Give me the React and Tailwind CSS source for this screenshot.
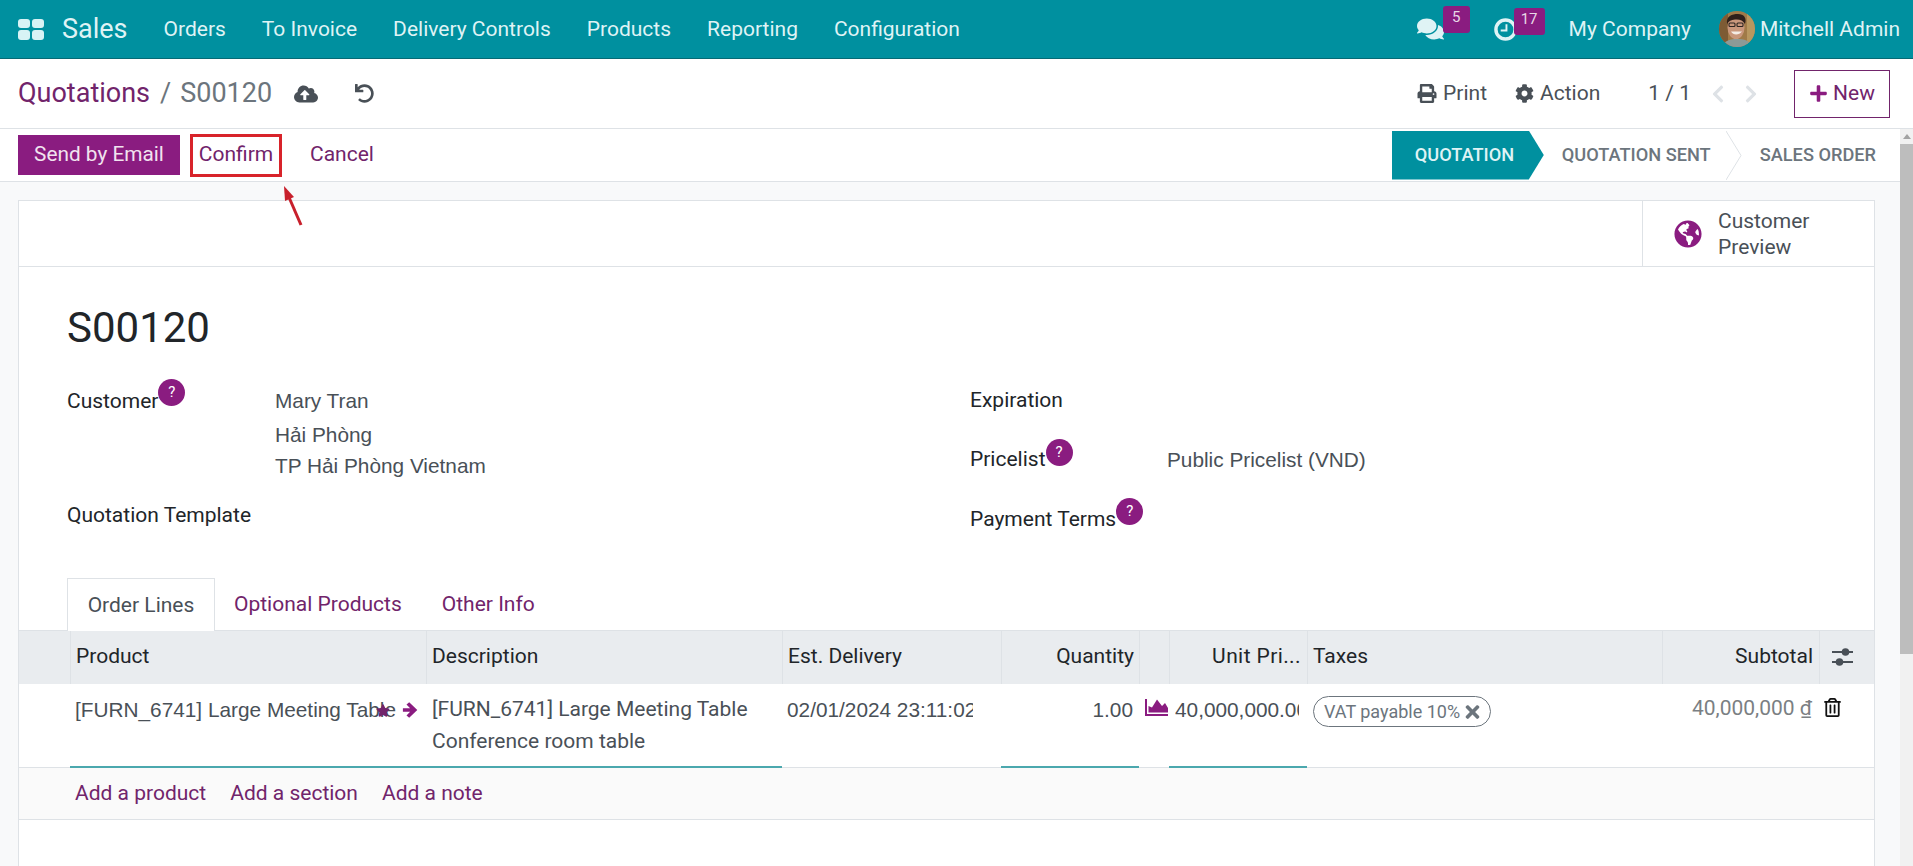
import React from "react";
import { FaComments, FaCloudUploadAlt, FaUndo, FaPrint, FaCog, FaPlus, FaChevronLeft, FaChevronRight, FaGlobeAmericas, FaStar, FaTimes, FaRegTrashAlt } from "react-icons/fa";

function Grid() {
  return (
    <div className="grid grid-cols-2 gap-[2px] w-[26px] h-[21px]">
      <div className="bg-[#d8f3f5] rounded-[3px]" />
      <div className="bg-[#d8f3f5] rounded-[3px]" />
      <div className="bg-[#d8f3f5] rounded-[3px]" />
      <div className="bg-[#d8f3f5] rounded-[3px]" />
    </div>
  );
}

function Avatar() {
  return (
    <svg width="36" height="36" viewBox="0 0 36 36" className="block shrink-0">
      <defs><clipPath id="av"><circle cx="18" cy="18" r="18" /></clipPath></defs>
      <g clipPath="url(#av)">
        <rect width="36" height="36" fill="#a07a48" />
        <rect x="0" y="0" width="9" height="36" fill="#7d5b34" />
        <rect x="28" y="0" width="8" height="36" fill="#b8975f" />
        <path d="M3 36 C5 29 12 28 18 28 C25 28 31 29 33 36 Z" fill="#8d9a97" />
        <ellipse cx="17" cy="16.5" rx="8.5" ry="11.5" fill="#c9977c" />
        <path d="M8 13 C7 5 13 3 19 3 C25 3 28 7 26 13 C24 9 20 8 16 8.500 C12 9 10 10 8 13 Z" fill="#2e201a" />
        <rect x="10" y="12" width="6" height="3.500" rx="1" fill="none" stroke="#2c2420" strokeWidth="1.100" />
        <rect x="18" y="12" width="6" height="3.500" rx="1" fill="none" stroke="#2c2420" strokeWidth="1.100" />
        <path d="M12 20.500 C14 24.500 20 24.500 23 20.500 Z" fill="#f4ece6" />
      </g>
    </svg>
  );
}

function Help() {
  return (
    <span className="inline-flex items-center justify-center w-[27px] h-[27px] rounded-full bg-[#8a1c80] text-white text-[15px]">?</span>
  );
}

function Th({ className = "", children }) {
  return <div className={`h-full flex items-center border-l border-[#dee2e6] px-[5px] pb-[2px] shrink-0 ${className}`}>{children}</div>;
}

export default function App() {
  return (
    <div className="w-[1913px] h-[866px] overflow-hidden flex flex-col bg-white text-[#4c4c4c] font-['Roboto',sans-serif]">
      {/* navbar */}
      <header className="h-[59px] shrink-0 bg-[#00909f] border-b border-[#066a75] flex items-center text-[#dff3f5] pl-[18px] pr-[13px]">
        <Grid />
        <span className="ml-[18px] text-[27px]">Sales</span>
        <nav className="ml-[36px] mt-[2px] flex gap-[36px] text-[21px]">
          <span>Orders</span>
          <span>To Invoice</span>
          <span>Delivery Controls</span>
          <span>Products</span>
          <span>Reporting</span>
          <span>Configuration</span>
        </nav>
        <div className="ml-auto flex items-center text-[21px]">
          <span className="relative">
            <FaComments className="w-[27px] h-[24px]" />
            <span className="absolute -top-[11px] left-[26px] h-[27px] w-[27px] bg-[#8a1c80] rounded-[3px] text-[#e8d8e6] text-[15px] leading-[22px] text-center">5</span>
          </span>
          <span className="relative ml-[50px]">
            <svg width="23" height="23" viewBox="0 0 24 24" className="block">
              <circle cx="12" cy="12" r="10" fill="none" stroke="currentColor" strokeWidth="3.600" />
              <path d="M13 6.500 V13 H7" fill="none" stroke="currentColor" strokeWidth="2" />
            </svg>
            <span className="absolute -top-[10px] left-[20px] h-[27px] w-[31px] bg-[#8a1c80] rounded-[3px] text-[#e8d8e6] text-[15px] leading-[22px] text-center">17</span>
          </span>
          <span className="ml-[52px] mt-[2px]">My Company</span>
          <span className="ml-[28px]"><Avatar /></span>
          <span className="ml-[5px] mt-[2px]">Mitchell Admin</span>
        </div>
      </header>

      {/* control panel */}
      <div className="h-[70px] shrink-0 flex items-center pl-[18px] pr-[23px] border-b border-[#dee2e6]">
        <span className="text-[27px] text-[#71246b]">Quotations</span>
        <span className="text-[27px] text-[#6c757d] ml-[10px]">/</span>
        <span className="text-[27px] text-[#6c757d] ml-[9px]">S00120</span>
        <FaCloudUploadAlt className="ml-[22px] w-[24px] h-[20px] text-[#495057]" />
        <FaUndo className="ml-[37px] w-[19px] h-[19px] text-[#495057]" />
        <div className="ml-auto flex items-center text-[21px] text-[#495057]">
          <FaPrint className="w-[20px] h-[19px]" />
          <span className="ml-[6px]">Print</span>
          <FaCog className="ml-[28px] w-[19px] h-[19px]" />
          <span className="ml-[6px]">Action</span>
          <span className="ml-[48px]">1 / 1</span>
          <FaChevronLeft className="ml-[18px] w-[18px] h-[20px] text-[#dee2e6]" />
          <FaChevronRight className="ml-[15px] w-[18px] h-[20px] text-[#dee2e6]" />
          <span className="ml-[34px] w-[96px] h-[48px] border border-[#71246b] flex items-center justify-center text-[#71246b]">
            <FaPlus className="w-[19px] h-[19px] text-[#8a1c80]" />
            <span className="ml-[5px]">New</span>
          </span>
        </div>
      </div>

      {/* body + scrollbar */}
      <div className="flex-1 min-h-0 flex">
        <div className="w-[1900px] flex flex-col">
          {/* action bar */}
          <div className="h-[53px] shrink-0 bg-white border-b border-[#dee2e6] flex items-center pl-[18px] relative">
            <button className="w-[162px] h-[40px] bg-[#8a1c80] text-[#f1e3ef] text-[20.8px]">Send by Email</button>
            <button className="ml-[10px] w-[92px] h-[43px] border-[3px] border-[#d8232a] text-[#71246b] text-[21px]">Confirm</button>
            <span className="ml-[28px] text-[21px] text-[#71246b]">Cancel</span>
            <svg className="absolute left-[278px] top-[54px]" width="30" height="44" viewBox="0 0 30 44">
              <path d="M23 42 L10 12" stroke="#c8202c" strokeWidth="3" fill="none" />
              <path d="M6 3 L16 14 L7 18 Z" fill="#c8202c" />
            </svg>
            <div className="ml-auto h-[49px] flex items-center pr-[24px] text-[18.2px] font-medium text-[#6c757d]">
              <span className="h-full w-[152px] pl-[23px] flex items-center bg-[#00909f] text-[#dff3f5] [clip-path:polygon(0_0,137px_0,100%_50%,137px_100%,0_100%)]">QUOTATION</span>
              <span className="ml-[18px]">QUOTATION SENT</span>
              <svg className="ml-[15px] shrink-0" width="16" height="49" viewBox="0 0 16 49">
                <path d="M0 0 L15 24.500 L0 49" stroke="#dee2e6" fill="none" />
              </svg>
              <span className="ml-[18px]">SALES ORDER</span>
            </div>
          </div>

          {/* content */}
          <main className="flex-1 min-h-0 bg-[#f8f9fa] pt-[18px] pl-[18px] pr-[25px]">
            <div className="h-full bg-white border-x border-t border-[#dee2e6]">
              {/* button box */}
              <div className="h-[66px] border-b border-[#dee2e6] flex justify-end">
                <div className="w-[232px] border-l border-[#dee2e6] flex items-center pl-[31px]">
                  <FaGlobeAmericas className="w-[28px] h-[28px] text-[#8a1c80]" />
                  <span className="ml-[16px] text-[21px] leading-[26px] text-[#495057]">Customer<br />Preview</span>
                </div>
              </div>

              {/* form */}
              <div className="px-[48px] pt-[35px] h-[311px]">
                <h1 className="text-[42px] leading-[52px] text-[#212529]">S00120</h1>
                <div className="grid grid-cols-[903px_1fr] mt-[28px] text-[21px]">
                  <div>
                    <div className="flex">
                      <div className="w-[208px] flex items-start text-[#212529] shrink-0">
                        <span className="mt-[4px]">Customer</span>
                        <span className="-mt-[7px]"><Help /></span>
                      </div>
                      <div className="text-[#495057] mt-[5px] text-[20.8px] font-['Liberation_Sans',sans-serif]">
                        <div className="leading-[27px]">Mary Tran</div>
                        <div className="mt-[7px] leading-[27px]">Hải Phòng</div>
                        <div className="mt-[4px] leading-[27px]">TP Hải Phòng Vietnam</div>
                      </div>
                    </div>
                    <div className="mt-[23px] text-[#212529] leading-[27px]">Quotation Template</div>
                  </div>
                  <div>
                    <div className="mt-[5px] text-[#212529] leading-[27px]">Expiration</div>
                    <div className="flex mt-[16px] items-start">
                      <div className="w-[197px] flex items-start text-[#212529]">
                        <span className="mt-[16px] leading-[27px]">Pricelist</span>
                        <span className="mt-[5px]"><Help /></span>
                      </div>
                      <span className="mt-[16px] leading-[27px] text-[#495057] text-[20.8px] font-['Liberation_Sans',sans-serif]">Public Pricelist (VND)</span>
                    </div>
                    <div className="flex items-start mt-[24px] text-[#212529]">
                      <span className="mt-[9px] leading-[27px]">Payment Terms</span>
                      <span className="-mt-[3px]"><Help /></span>
                    </div>
                  </div>
                </div>
              </div>

              {/* tabs */}
              <div className="h-[52px] pl-[48px] flex text-[21px] text-[#71246b]">
                <span className="w-[148px] h-[53px] pt-[1px] bg-white border border-b-0 border-[#dee2e6] text-[#495057] flex items-center justify-center relative z-10">Order Lines</span>
                <span className="ml-[19px] pt-[2px] flex items-center">Optional Products</span>
                <span className="ml-[40px] pt-[2px] flex items-center">Other Info</span>
              </div>

              {/* table */}
              <div className="h-[54px] bg-[#e9ecef] border-t border-[#dee2e6] flex items-center text-[21px] text-[#212529]">
                <div className="w-[51px] shrink-0" />
                <Th className="w-[356px]">Product</Th>
                <Th className="w-[356px]">Description</Th>
                <Th className="w-[219px]">Est. Delivery</Th>
                <Th className="w-[138px] justify-end">Quantity</Th>
                <Th className="w-[30px]" />
                <Th className="w-[138px] justify-end pr-[6px] tracking-[0.4px]">Unit Pri...</Th>
                <Th className="w-[355px]">Taxes</Th>
                <Th className="w-[157px] justify-end pr-[6px]">Subtotal</Th>
                <Th className="flex-1 justify-center pl-0 pr-[10px]">
                  <svg width="21" height="20" viewBox="0 0 21 20" className="text-[#495057]">
                    <rect x="0" y="4" width="21" height="2" fill="currentColor" />
                    <rect x="0" y="14" width="21" height="2" fill="currentColor" />
                    <circle cx="13.500" cy="5" r="3.800" fill="currentColor" />
                    <circle cx="7.500" cy="15" r="3.800" fill="currentColor" />
                  </svg>
                </Th>
              </div>
              <div className="h-[84px] border-b border-[#dee2e6] flex text-[20.8px] text-[#495057] relative">
                <div className="w-[51px] shrink-0" />
                <div className="w-[356px] shrink-0 pl-[5px] pt-[12px] border-b-2 border-[#4ba8ae] h-[84px] flex relative font-['Liberation_Sans',sans-serif]">
                  <span className="whitespace-nowrap leading-[28px] h-[28px]">[FURN_6741] Large Meeting Table</span>
                  <FaStar className="absolute left-[306px] top-[20px] w-[14px] h-[13px] text-[#71246b]" />
                  <svg width="18" height="18" viewBox="0 0 20 20" className="absolute left-[332px] top-[17px] text-[#8a1c80]">
                    <polygon points="1,8 9,8 5,4 8,1.500 17,10 8,18.500 5,16 9,12 1,12" fill="currentColor" />
                  </svg>
                </div>
                <div className="w-[356px] shrink-0 pl-[6px] pt-[9px] border-b-2 border-[#4ba8ae] h-[84px] leading-[32px] text-[21px]">
                  <div>[FURN_6741] Large Meeting Table</div>
                  <div>Conference room table</div>
                </div>
                <div className="w-[219px] shrink-0 pl-[5px] pr-[28px] pt-[12px] leading-[28px] font-['Liberation_Sans',sans-serif]"><div className="overflow-hidden whitespace-nowrap">02/01/2024 23:11:02</div></div>
                <div className="w-[138px] shrink-0 px-[6px] pt-[12px] leading-[28px] text-right border-b-2 border-[#4ba8ae] h-[84px] font-['Liberation_Sans',sans-serif]">1.00</div>
                <div className="w-[30px] shrink-0 pl-[6px] pt-[15px]">
                  <svg width="23" height="17" viewBox="0 0 23 17" className="block text-[#8a1c80]">
                    <path d="M0 0 H2 V15 H23 V17 H0 Z" fill="currentColor" />
                    <path d="M3.500 13.500 V7 L7 8.500 L12 0.500 L17 7 L20 4 L23 9 V13.500 Z" fill="currentColor" />
                  </svg>
                </div>
                <div className="w-[138px] shrink-0 pl-[6px] pr-[8px] pt-[12px] leading-[28px] border-b-2 border-[#4ba8ae] h-[84px] font-['Liberation_Sans',sans-serif]"><div className="overflow-hidden whitespace-nowrap">40,000,000.00</div></div>
                <div className="w-[355px] shrink-0 pl-[6px] pt-[12px]">
                  <span className="inline-flex items-center w-[178px] h-[31px] border border-[#6c757d] rounded-full pl-[10px] text-[18px] text-[#6c757d]">
                    VAT payable 10%
                    <FaTimes className="ml-[5px] w-[15px] h-[20px]" />
                  </span>
                </div>
                <div className="w-[156px] shrink-0 pt-[10px] pr-[6px] text-right leading-[28px] text-[#7b7f83] text-[21px]">40,000,000 <span className="underline">₫</span></div>
                <div className="pl-[6px] pt-[14px]"><FaRegTrashAlt className="w-[17px] h-[19px] text-[#111]" /></div>
              </div>
              <div className="h-[52px] bg-[#fafafa] border-b border-[#dee2e6] pl-[56px] flex items-center gap-[24px] text-[21px] text-[#71246b]">
                <span>Add a product</span>
                <span>Add a section</span>
                <span>Add a note</span>
              </div>
            </div>
          </main>
        </div>

        {/* scrollbar */}
        <div className="w-[13px] shrink-0 bg-[#f1f1f1] flex flex-col">
          <div className="h-[15px] flex items-center justify-center">
            <div className="w-0 h-0 border-x-[4px] border-x-transparent border-b-[5px] border-b-[#a3a3a3]" />
          </div>
          <div className="h-[510px] bg-[#bdbdbd]" />
        </div>
      </div>
    </div>
  );
}
